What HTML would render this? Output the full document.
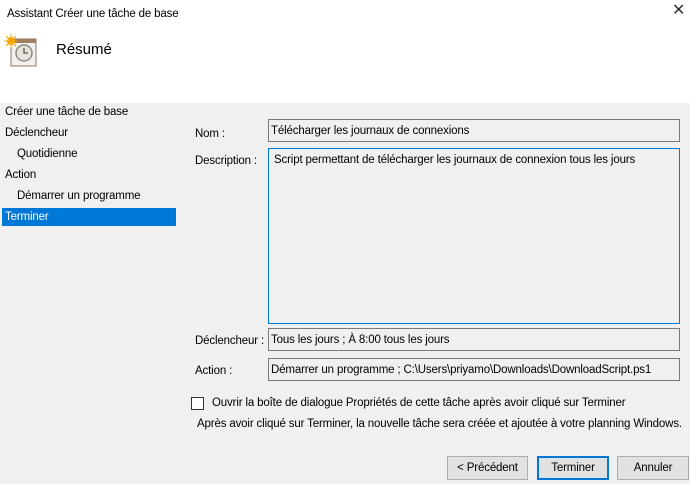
<!DOCTYPE html><html><head><style>
body{margin:0;width:690px;height:484px;background:#f0f0f0;font-family:"Liberation Sans",sans-serif;font-size:11.5px;line-height:16px;letter-spacing:-0.15px;color:#000;position:relative;overflow:hidden}
.a{position:absolute;white-space:nowrap}
.box{position:absolute;border:1px solid #7a7a7a;background:#f0f0f0;box-sizing:border-box;padding:3px 2px;white-space:nowrap;overflow:hidden}
.btn{position:absolute;top:456px;height:24px;border:1px solid #adadad;background:#e1e1e1;box-sizing:border-box;text-align:center;line-height:22px}
</style></head><body>
<div class="a" style="left:0;top:0;width:690px;height:103px;background:#fff"></div>
<div class="a" style="left:7px;top:6px">Assistant Créer une tâche de base</div>
<div class="a" style="left:672px;top:3px;font-size:16px;color:#333">✕</div>
<svg class="a" style="left:4px;top:34px" width="34" height="34" viewBox="0 0 34 34">
<rect x="7" y="5" width="25" height="27" fill="#f4f1ec" stroke="#8a7a6a"/>
<rect x="7" y="5" width="25" height="4" fill="#a08060"/>
<circle cx="20" cy="19" r="8" fill="#e8e4dc" stroke="#8a8a8a" stroke-width="1.5"/>
<path d="M20 14v5h4" stroke="#555" fill="none" stroke-width="1.3"/>
<circle cx="7" cy="7" r="4" fill="#f8b800"/>
<path d="M7 0v14M0 7h14M2 2l10 10M12 2L2 12" stroke="#f4a000" stroke-width="1"/>
</svg>
<div class="a" style="left:56px;top:42px;font-size:15px;letter-spacing:0">Résumé</div>
<div class="a" style="left:5px;top:104px">Créer une tâche de base</div>
<div class="a" style="left:5px;top:125px">Déclencheur</div>
<div class="a" style="left:17px;top:146px">Quotidienne</div>
<div class="a" style="left:5px;top:167px">Action</div>
<div class="a" style="left:17px;top:188px">Démarrer un programme</div>
<div class="a" style="left:2px;top:208px;width:174px;height:18px;background:#0078d7"></div>
<div class="a" style="left:5px;top:209px;color:#fff">Terminer</div>
<div class="a" style="left:195px;top:126px">Nom :</div>
<div class="box" style="left:268px;top:119px;width:412px;height:23px">Télécharger les journaux de connexions</div>
<div class="a" style="left:195px;top:153px">Description :</div>
<div class="box" style="left:268px;top:148px;width:412px;height:176px;border-color:#0078d7;padding:3px 5px">Script permettant de télécharger les journaux de connexion tous les jours</div>
<div class="a" style="left:195px;top:333px">Déclencheur :</div>
<div class="box" style="left:268px;top:328px;width:412px;height:23px">Tous les jours ; À 8:00 tous les jours</div>
<div class="a" style="left:195px;top:363px">Action :</div>
<div class="box" style="left:268px;top:358px;width:412px;height:23px">Démarrer un programme ; C:\Users\priyamo\Downloads\DownloadScript.ps1</div>
<div class="a" style="left:191px;top:397px;width:13px;height:13px;border:1px solid #333;background:#fff;box-sizing:border-box"></div>
<div class="a" style="left:212px;top:395px">Ouvrir la boîte de dialogue Propriétés de cette tâche après avoir cliqué sur Terminer</div>
<div class="a" style="left:197px;top:416px">Après avoir cliqué sur Terminer, la nouvelle tâche sera créée et ajoutée à votre planning Windows.</div>
<div class="btn" style="left:447px;width:81px">&lt; Précédent</div>
<div class="btn" style="left:537px;width:72px;border:2px solid #0078d7;line-height:20px">Terminer</div>
<div class="btn" style="left:617px;width:72px">Annuler</div>
</body></html>
